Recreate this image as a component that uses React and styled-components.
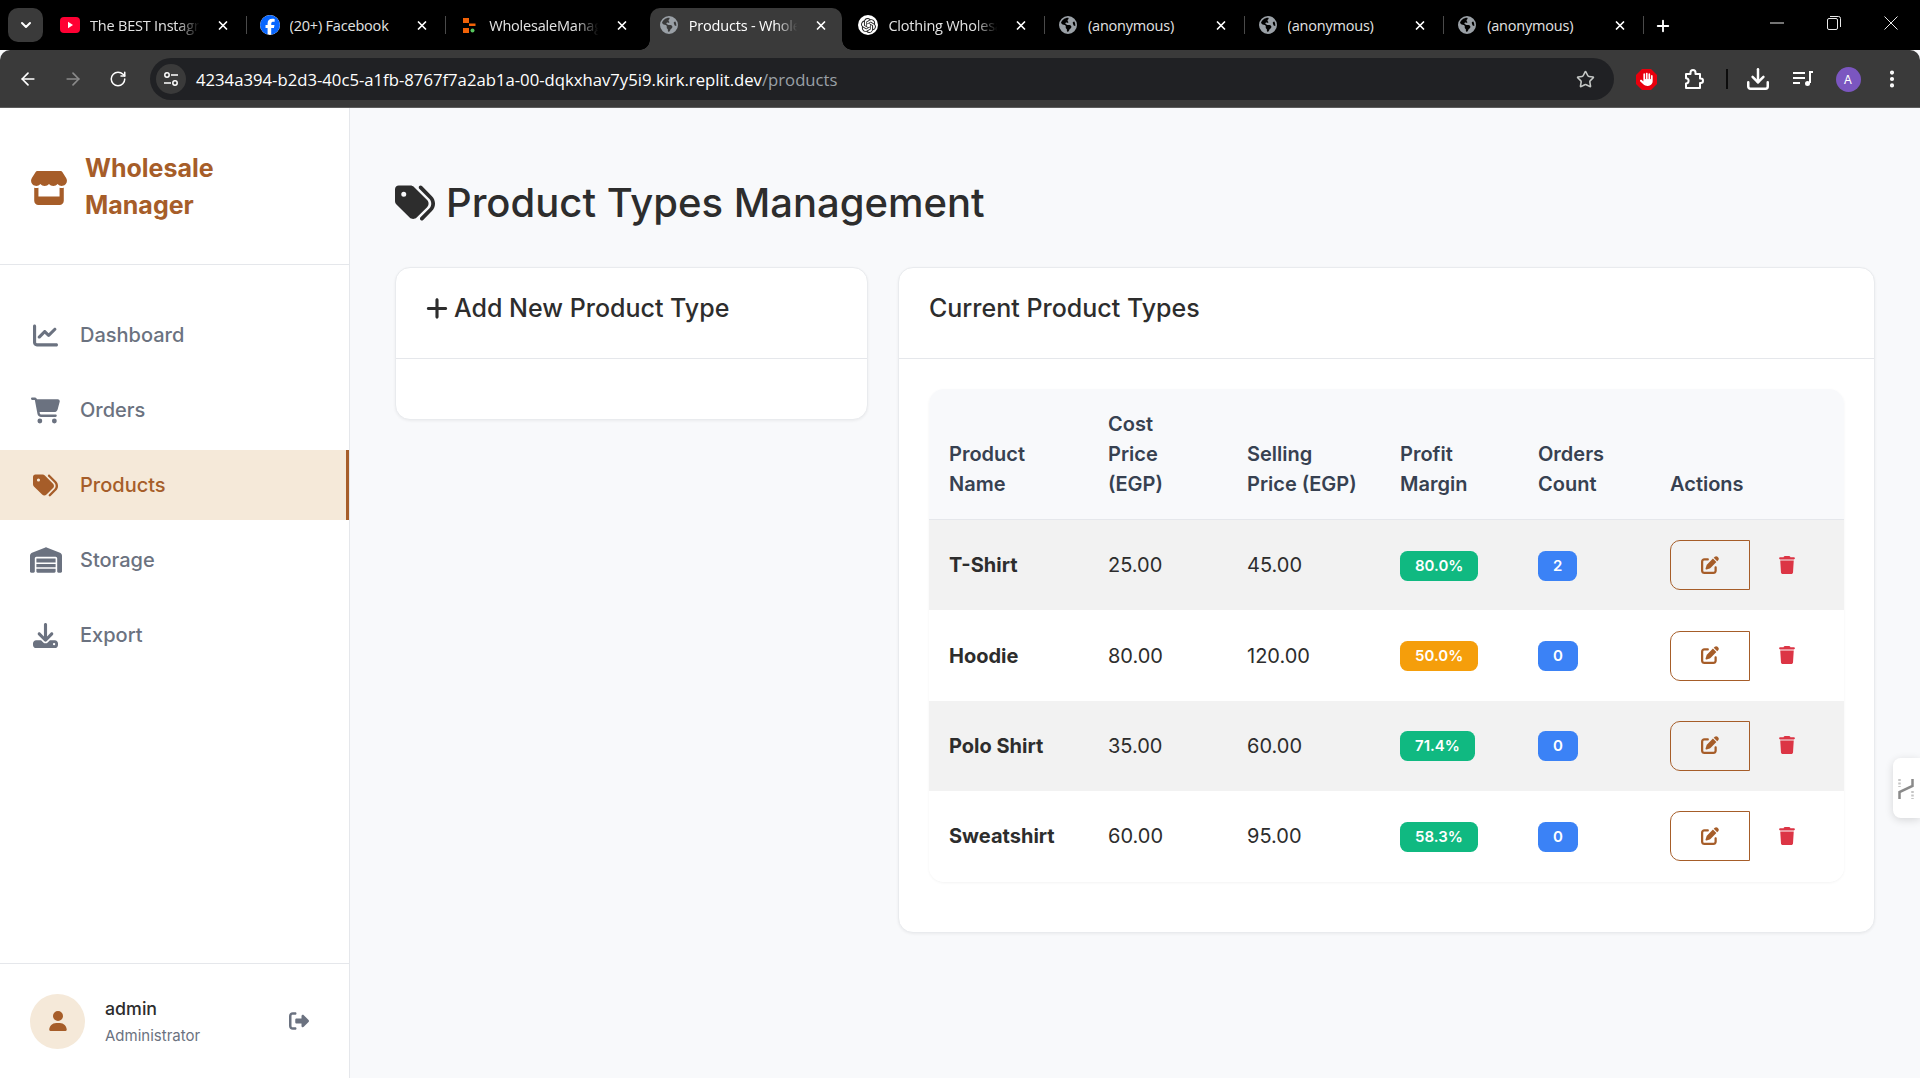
import styled, { createGlobalStyle } from "styled-components";
import {
  FaStore,
  FaChartLine,
  FaCartShopping,
  FaTags,
  FaWarehouse,
  FaDownload,
  FaUser,
  FaRightFromBracket,
  FaPlus,
  FaPenToSquare,
  FaTrash,
  FaFacebook,
  FaEarthAmericas,
  FaHand,
} from "react-icons/fa6";
import { SiOpenai } from "react-icons/si";
import {
  ArrowLeft,
  ArrowRight,
  RotateCw,
  Star,
  X,
  Plus,
  ChevronDown,
  Download,
  EllipsisVertical,
} from "lucide-react";

const brown = "#a65d29";
const grey = "#6b7280";
const ink = "#2d2d2d";

const GlobalStyle = createGlobalStyle`
  * { box-sizing: border-box; }
  html, body { margin: 0; height: 100%; }
  body {
    background: #f8f9fb;
    color: ${ink};
    font-family: Inter, "Liberation Sans", sans-serif;
    overflow: hidden;
  }
`;

const Window = styled.div`
  height: 1078px;
  display: flex;
  flex-direction: column;
`;

/* browser chrome */
const TabStrip = styled.div`
  height: 50px;
  flex: none;
  background: #000;
  display: flex;
  align-items: flex-end;
  padding-left: 8px;
`;

const TabMenu = styled.div`
  width: 35px;
  height: 34px;
  margin: 0 7px 8px 0;
  border-radius: 10px;
  background: #3a3a3a;
  color: #fff;
  display: flex;
  align-items: center;
  justify-content: center;
`;

const Tab = styled.div`
  position: relative;
  width: 199.6px;
  height: 42px;
  flex: none;
  display: flex;
  align-items: center;
  padding: 0 20px 8px 10px;
  color: ${(p) => (p.$active ? "#fff" : "#e3e3e3")};
  font-family: "Open Sans", sans-serif;
  font-size: 14.5px;
  letter-spacing: -0.2px;

  &::after {
    content: "";
    position: absolute;
    right: 3px;
    top: 8px;
    height: 18px;
    width: 1px;
    background: ${(p) => (p.$sep ? "#4a4a4a" : "transparent")};
  }
`;

const ActiveShape = styled.div`
  position: absolute;
  left: 1px;
  right: 6px;
  top: 0;
  bottom: 0;
  background: #3a3a3a;
  border-radius: 10px 10px 0 0;

  &::before,
  &::after {
    content: "";
    position: absolute;
    bottom: 0;
    width: 10px;
    height: 10px;
  }
  &::before {
    left: -10px;
    background: radial-gradient(circle at 0 0, #000 9.5px, #3a3a3a 10px);
  }
  &::after {
    right: -10px;
    background: radial-gradient(circle at 100% 0, #000 9.5px, #3a3a3a 10px);
  }
`;

const TabIcon = styled.div`
  position: relative;
  width: 20px;
  height: 20px;
  margin-right: 10px;
  flex: none;
  display: flex;
  align-items: center;
  justify-content: center;
`;

const TabTitle = styled.div`
  position: relative;
  flex: 1;
  min-width: 0;
  white-space: nowrap;
  overflow: hidden;
  -webkit-mask-image: ${(p) =>
    p.$fade ? "linear-gradient(90deg, #000 76%, transparent 96%)" : "none"};
  mask-image: ${(p) =>
    p.$fade ? "linear-gradient(90deg, #000 76%, transparent 96%)" : "none"};
`;

const TabClose = styled.div`
  position: relative;
  width: 14px;
  margin-left: 12px;
  flex: none;
  display: flex;
  justify-content: center;
  color: #fff;
`;

const NewTab = styled.div`
  color: #fff;
  margin: 0 0 15px 7px;
  display: flex;
`;

const WindowButtons = styled.div`
  margin-left: auto;
  margin-right: 1px;
  display: flex;
  align-self: flex-start;
`;

const WindowButton = styled.div`
  width: 57px;
  height: 50px;
  display: flex;
  align-items: center;
  justify-content: center;
  color: #e8e8e8;
  padding-bottom: 4px;
`;

const OpenAiBadge = styled.div`
  width: 20px;
  height: 20px;
  border-radius: 50%;
  background: #fff;
  display: flex;
  align-items: center;
  justify-content: center;
`;

const FacebookIcon = styled(FaFacebook)`
  background: #fff;
  border-radius: 50%;
  color: #0866ff;
`;

const Toolbar = styled.div`
  height: 58px;
  flex: none;
  background: #3a3a3a;
  border-radius: 10px 10px 0 0;
  border-bottom: 1px solid #5c5c5c;
  display: flex;
  align-items: center;
  padding: 1px 0 0 5px;
  color: #fff;
`;

const NavButton = styled.div`
  width: 45px;
  display: flex;
  justify-content: center;
  color: ${(p) => (p.$dim ? "#8a8a8a" : "#fff")};
`;

const Omnibox = styled.div`
  width: 1464px;
  height: 42px;
  margin: 0 8px 0 10px;
  border-radius: 21px;
  background: #202124;
  display: flex;
  align-items: center;
  padding: 0 19px 0 6px;
`;

const SiteInfo = styled.div`
  width: 30px;
  height: 30px;
  border-radius: 50%;
  background: #3a3a3a;
  display: flex;
  align-items: center;
  justify-content: center;
  margin-right: 10px;
`;

const Url = styled.div`
  flex: 1;
  font-family: "Open Sans", sans-serif;
  font-size: 16.7px;
  color: #fff;
  white-space: nowrap;

  span {
    color: #9aa0a6;
  }
`;

const ExtensionSlot = styled.div`
  width: ${(p) => p.$w}px;
  display: flex;
  justify-content: center;
`;

const ToolbarDivider = styled.div`
  width: 2px;
  height: 20px;
  background: #0c0c0c;
  margin: 0 10px;
`;

const ProfileDot = styled.div`
  width: 25px;
  height: 25px;
  border-radius: 50%;
  background: #7b56c0;
  color: #fff;
  font-size: 12px;
  display: flex;
  align-items: center;
  justify-content: center;
`;

/* page */
const Page = styled.div`
  flex: 1;
  min-height: 0;
  display: flex;
`;

const Sidebar = styled.aside`
  width: 350px;
  flex: none;
  background: #fff;
  border-right: 1px solid #e5e7eb;
  display: flex;
  flex-direction: column;
`;

const Brand = styled.div`
  height: 157px;
  padding: 2px 30px 0;
  border-bottom: 1px solid #e5e7eb;
  display: flex;
  align-items: center;
  gap: 17px;
  color: ${brown};

  svg {
    flex: none;
    margin-top: 2px;
  }
`;

const BrandName = styled.div`
  font-size: 25px;
  font-weight: 700;
  line-height: 37.5px;
  width: 180px;
`;

const Nav = styled.nav`
  padding-top: 35px;
  display: flex;
  flex-direction: column;
  gap: 5px;
`;

const NavItem = styled.div`
  height: 70px;
  display: flex;
  align-items: center;
  padding-left: 30px;
  font-size: 20px;
  font-weight: 500;
  color: ${(p) => (p.$active ? brown : grey)};
  background: ${(p) => (p.$active ? "#f5e9d9" : "transparent")};
  border-right: ${(p) => (p.$active ? `3px solid ${brown}` : "0")};
`;

const NavIcon = styled.div`
  width: 31px;
  margin-right: 19px;
  display: flex;
  justify-content: center;

  svg {
    flex: none;
  }
`;

const UserPanel = styled.div`
  margin-top: auto;
  height: 115px;
  border-top: 1px solid #e5e7eb;
  display: flex;
  align-items: center;
  padding: 0 30px;
`;

const Avatar = styled.div`
  width: 55px;
  height: 55px;
  border-radius: 50%;
  background: #f5e9d9;
  color: ${brown};
  display: flex;
  align-items: center;
  justify-content: center;
  margin-right: 20px;
`;

const UserInfo = styled.div`
  flex: 1;
  padding-top: 2px;
`;

const UserName = styled.div`
  font-size: 17.8px;
  font-weight: 500;
  line-height: 27px;
`;

const UserRole = styled.div`
  font-size: 15px;
  color: ${grey};
  line-height: 27px;
`;

const Logout = styled.div`
  color: ${grey};
  display: flex;
  margin-right: 10px;
`;

const Main = styled.main`
  flex: 1;
  min-width: 0;
  padding: 71px 45px 0;
`;

const PageTitle = styled.h1`
  margin: 0 0 40px;
  font-size: 40px;
  font-weight: 500;
  line-height: 48px;
  display: flex;
  align-items: center;
  gap: 11px;

  svg {
    height: 40px;
    width: 40px;
    flex: none;
  }
`;

const Columns = styled.div`
  display: grid;
  grid-template-columns: 473px 1fr;
  gap: 30px;
  align-items: start;
`;

const Card = styled.section`
  background: #fff;
  border: 1px solid #e9ebee;
  border-radius: 15px;
  box-shadow: 0 1px 3px rgba(0, 0, 0, 0.06);
`;

const CardHeader = styled.div`
  height: 91px;
  padding: 25px 30px 0;
  border-bottom: 1px solid #e5e7eb;
`;

const CardTitle = styled.h5`
  margin: 0;
  font-size: 25px;
  font-weight: 500;
  line-height: 30px;
  display: flex;
  align-items: center;
  gap: 6px;

  svg {
    width: 22px;
    height: 25px;
  }
`;

const CardBody = styled.div`
  padding: 30px 30px ${(p) => (p.$table ? "50px" : "30px")};
`;

const TableWrap = styled.div`
  border-radius: 15px;
  overflow: hidden;
  box-shadow: 0 1px 3px rgba(0, 0, 0, 0.05);
`;

const Table = styled.table`
  width: 100%;
  table-layout: fixed;
  border-collapse: separate;
  border-spacing: 0;
  font-size: 20px;
`;

const Th = styled.th`
  padding: 20px;
  background: #f8f9fb;
  border-bottom: 1px solid #e5e7eb;
  font-weight: 600;
  line-height: 30px;
  text-align: left;
  vertical-align: bottom;
  color: #374151;
`;

const Tr = styled.tr`
  background: ${(p) => (p.$striped ? "#f2f2f2" : "#fff")};
`;

const Td = styled.td`
  height: 90.4px;
  padding: 0 20px;
  font-weight: ${(p) => (p.$strong ? 700 : 400)};
  white-space: nowrap;
`;

const Badge = styled.span`
  display: inline-block;
  height: 30px;
  margin-top: 1px;
  padding: 0 15px;
  border-radius: 7.5px;
  background: ${(p) => p.$bg};
  color: #fff;
  font-size: 15px;
  font-weight: 600;
  line-height: 30px;
  vertical-align: middle;
`;

const Actions = styled.div`
  display: flex;
  align-items: center;
`;

const EditButton = styled.div`
  width: 80.5px;
  height: 50px;
  border: 1px solid ${brown};
  border-radius: 10px 0 0 10px;
  color: ${brown};
  display: flex;
  align-items: center;
  justify-content: center;
  padding-bottom: 1px;
`;

const DeleteButton = styled.div`
  width: 75px;
  color: #dc3545;
  display: flex;
  justify-content: center;
  padding-bottom: 1px;
`;

const SideHandle = styled.div`
  position: fixed;
  right: 0;
  top: 758px;
  width: 27px;
  height: 60px;
  background: #fff;
  border-radius: 8px 0 0 8px;
  box-shadow: 0 2px 8px rgba(0, 0, 0, 0.14);
  display: flex;
  align-items: center;
  padding: 2px 0 0 5px;
`;

const ReplitIcon = () => (
  <svg width="13" height="15" viewBox="0 0 13 15">
    <rect width="6" height="5" fill="#f26207" />
    <rect x="6" y="5.5" width="6.5" height="2.5" fill="#f26207" />
    <rect y="10" width="6" height="5" fill="#f26207" />
    <circle cx="9.5" cy="12.5" r="2" fill="#57c75e" />
  </svg>
);

const Globe = () => <FaEarthAmericas size={18} color="#9aa0a6" />;

const YoutubeIcon = () => (
  <svg width="20" height="16" viewBox="0 0 20 16">
    <rect width="20" height="16" rx="4" fill="#ff0033" />
    <path d="M8 4.8v6.4l5-3.2z" fill="#fff" />
  </svg>
);

const tabs = [
  { icon: <YoutubeIcon />, title: "The BEST Instagram Reels", sep: true, fade: true },
  { icon: <FacebookIcon size={20} />, title: "(20+) Facebook", sep: true },
  { icon: <ReplitIcon />, title: "WholesaleManager", fade: true },
  { icon: <Globe />, title: "Products - Wholesale", active: true, fade: true },
  { icon: <OpenAiBadge><SiOpenai size={15} color="#222" /></OpenAiBadge>, title: "Clothing Wholesale", sep: true, fade: true },
  { icon: <Globe />, title: "(anonymous)", sep: true },
  { icon: <Globe />, title: "(anonymous)", sep: true },
  { icon: <Globe />, title: "(anonymous)", sep: true },
];

const navItems = [
  { label: "Dashboard", icon: <FaChartLine size={25} /> },
  { label: "Orders", icon: <FaCartShopping size={29} /> },
  { label: "Products", icon: <FaTags size={25} />, active: true },
  { label: "Storage", icon: <FaWarehouse size={32} /> },
  { label: "Export", icon: <FaDownload size={25} /> },
];

const products = [
  { name: "T-Shirt", cost: "25.00", price: "45.00", margin: "80.0%", color: "#10b981", orders: 2 },
  { name: "Hoodie", cost: "80.00", price: "120.00", margin: "50.0%", color: "#f59e0b", orders: 0 },
  { name: "Polo Shirt", cost: "35.00", price: "60.00", margin: "71.4%", color: "#10b981", orders: 0 },
  { name: "Sweatshirt", cost: "60.00", price: "95.00", margin: "58.3%", color: "#10b981", orders: 0 },
];

const columnWidths = [159, 139, 153, 138, 132, 194];

export default function App() {
  return (
    <Window>
      <GlobalStyle />
      <TabStrip>
        <TabMenu>
          <ChevronDown size={16} strokeWidth={3} />
        </TabMenu>
        {tabs.map((tab, i) => (
          <Tab key={i} $active={tab.active} $sep={tab.sep}>
            {tab.active && <ActiveShape />}
            <TabIcon>{tab.icon}</TabIcon>
            <TabTitle $fade={tab.fade}>{tab.title}</TabTitle>
            <TabClose>
              <X size={15} strokeWidth={3} />
            </TabClose>
          </Tab>
        ))}
        <NewTab>
          <Plus size={18} strokeWidth={2.5} />
        </NewTab>
        <WindowButtons>
          <WindowButton>
            <svg width="14" height="14" viewBox="0 0 14 14">
              <path d="M0 7h14" stroke="currentColor" />
            </svg>
          </WindowButton>
          <WindowButton>
            <svg width="14" height="14" viewBox="0 0 14 14" fill="none" stroke="currentColor">
              <rect x="0.5" y="2.5" width="10" height="11" rx="1.5" />
              <path d="M3 .5h8.5a2 2 0 0 1 2 2V11" />
            </svg>
          </WindowButton>
          <WindowButton>
            <svg width="14" height="14" viewBox="0 0 14 14">
              <path d="M.5.5l13 13M13.5.5l-13 13" stroke="currentColor" />
            </svg>
          </WindowButton>
        </WindowButtons>
      </TabStrip>

      <Toolbar>
        <NavButton><ArrowLeft size={20} strokeWidth={2} /></NavButton>
        <NavButton $dim><ArrowRight size={20} strokeWidth={2} /></NavButton>
        <NavButton><RotateCw size={18} strokeWidth={2} /></NavButton>
        <Omnibox>
          <SiteInfo>
            <svg width="16" height="16" viewBox="0 0 16 16" fill="none" stroke="#fff" strokeWidth="1.5">
              <circle cx="4" cy="4" r="2.2" />
              <path d="M8 4h7M1 12h7" />
              <circle cx="12" cy="12" r="2.2" />
            </svg>
          </SiteInfo>
          <Url>
            4234a394-b2d3-40c5-a1fb-8767f7a2ab1a-00-dqkxhav7y5i9.kirk.replit.dev<span>/products</span>
          </Url>
          <Star size={19} color="#c4c7c5" strokeWidth={2} />
        </Omnibox>
        <ExtensionSlot $w={48}>
          <svg width="21" height="21" viewBox="0 0 21 21">
            <path d="M6 0h9l6 6v9l-6 6H6l-6-6V6z" fill="#e8000d" />
            <FaHand x="4" y="3.5" size={13.5} color="#fff" />
          </svg>
        </ExtensionSlot>
        <ExtensionSlot $w={46}>
          <svg width="21" height="21" viewBox="0 0 21 21" fill="none" stroke="#fff" strokeWidth="2" strokeLinejoin="round">
            <path d="M3 5h4.5V3.5a2.5 2.5 0 0 1 5 0V5H17v4.5h.8a2.2 2.2 0 0 1 0 4.4H17V19H3v-4.6a2.6 2.6 0 0 0 0-5.2z" />
          </svg>
        </ExtensionSlot>
        <ToolbarDivider />
        <ExtensionSlot $w={40}>
          <Download size={26} strokeWidth={2.3} />
        </ExtensionSlot>
        <ExtensionSlot $w={50}>
          <svg width="20" height="18" viewBox="0 0 20 18" fill="none" stroke="#fff" strokeWidth="2">
            <path d="M0 3h12M0 8h12M0 13h7M17 2v11" />
            <circle cx="14.5" cy="13.5" r="2.5" fill="#fff" stroke="none" />
            <path d="M16 2h4" />
          </svg>
        </ExtensionSlot>
        <ExtensionSlot $w={40}>
          <ProfileDot>A</ProfileDot>
        </ExtensionSlot>
        <ExtensionSlot $w={48}>
          <EllipsisVertical size={22} strokeWidth={2.5} />
        </ExtensionSlot>
      </Toolbar>

      <Page>
        <Sidebar>
          <Brand>
            <FaStore size={38} />
            <BrandName>Wholesale Manager</BrandName>
          </Brand>
          <Nav>
            {navItems.map((item) => (
              <NavItem key={item.label} $active={item.active}>
                <NavIcon>{item.icon}</NavIcon>
                {item.label}
              </NavItem>
            ))}
          </Nav>
          <UserPanel>
            <Avatar>
              <FaUser size={20} />
            </Avatar>
            <UserInfo>
              <UserName>admin</UserName>
              <UserRole>Administrator</UserRole>
            </UserInfo>
            <Logout>
              <FaRightFromBracket size={20} />
            </Logout>
          </UserPanel>
        </Sidebar>

        <Main>
          <PageTitle>
            <FaTags />
            Product Types Management
          </PageTitle>
          <Columns>
            <Card>
              <CardHeader>
                <CardTitle>
                  <FaPlus />
                  Add New Product Type
                </CardTitle>
              </CardHeader>
              <CardBody />
            </Card>
            <Card>
              <CardHeader>
                <CardTitle>Current Product Types</CardTitle>
              </CardHeader>
              <CardBody $table>
                <TableWrap>
                  <Table>
                    <colgroup>
                      {columnWidths.map((w) => (
                        <col key={w} width={w} />
                      ))}
                    </colgroup>
                    <thead>
                      <tr>
                        <Th>Product Name</Th>
                        <Th>Cost Price (EGP)</Th>
                        <Th>Selling Price (EGP)</Th>
                        <Th>Profit Margin</Th>
                        <Th>Orders Count</Th>
                        <Th>Actions</Th>
                      </tr>
                    </thead>
                    <tbody>
                      {products.map((p, i) => (
                        <Tr key={p.name} $striped={i % 2 === 0}>
                          <Td $strong>{p.name}</Td>
                          <Td>{p.cost}</Td>
                          <Td>{p.price}</Td>
                          <Td><Badge $bg={p.color}>{p.margin}</Badge></Td>
                          <Td><Badge $bg="#3b82f6">{p.orders}</Badge></Td>
                          <Td>
                            <Actions>
                              <EditButton><FaPenToSquare size={18} /></EditButton>
                              <DeleteButton><FaTrash size={18} /></DeleteButton>
                            </Actions>
                          </Td>
                        </Tr>
                      ))}
                    </tbody>
                  </Table>
                </TableWrap>
              </CardBody>
            </Card>
          </Columns>
        </Main>
      </Page>

      <SideHandle>
        <svg width="16" height="20" viewBox="0 0 16 20" fill="none" stroke="#8a8a8a" strokeWidth="2.5">
          <path d="M1.5 20v-7l13-6V0" />
          <path d="M1.5 0v8M14.5 12v8" stroke="#c4c4c4" strokeDasharray="2 1.5" />
        </svg>
      </SideHandle>
    </Window>
  );
}
